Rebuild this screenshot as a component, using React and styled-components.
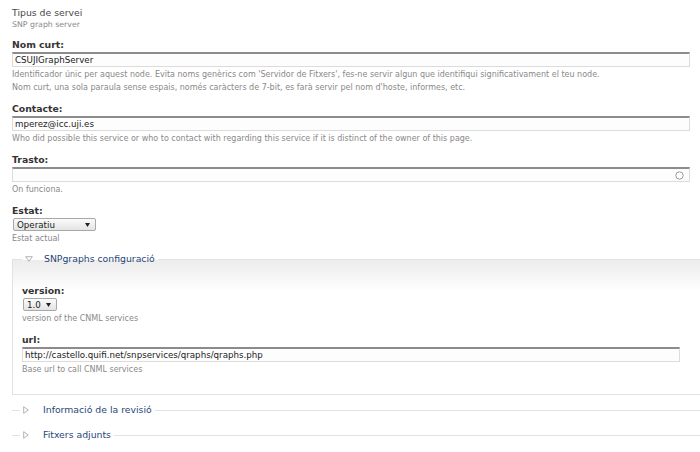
import React from 'react';
import styled, { createGlobalStyle } from 'styled-components';

const Global = createGlobalStyle`
  html, body { margin: 0; padding: 0; background: #fff; }
  body { font-family: "DejaVu Sans", Verdana, sans-serif; color: #494949; }
  * { box-sizing: border-box; }
`;

const Page = styled.div`
  width: 700px;
  overflow: hidden;
  padding: 7px 0 20px 12px;
`;

const Header = styled.div`
  margin-bottom: 9px;
`;

const Title = styled.div`
  font-size: 9.3px;
  line-height: 12px;
  color: #494949;
`;

const Sub = styled.div`
  font-size: 7.8px;
  line-height: 11px;
  color: #898989;
`;

const Item = styled.div`
  padding-right: ${(p) => p.$right ?? 10}px;
  margin-bottom: ${(p) => p.$mb ?? 10}px;
`;

const Label = styled.div`
  font-size: 9.3px;
  font-weight: bold;
  line-height: 12px;
  color: #333;
  margin-bottom: 1px;
`;

const Input = styled.div`
  position: relative;
  height: 15px;
  border: 1px solid #dcdcdc;
  border-top: 2px solid #8c8c8c;
  background: #fdfdfd;
  font-size: 8.7px;
  line-height: 12px;
  padding-left: 2px;
  color: #222;
  white-space: nowrap;
`;

const Throbber = styled.svg`
  position: absolute;
  right: 5px;
  top: 2px;
`;

const Desc = styled.div`
  font-size: 8px;
  line-height: 11px;
  color: #898989;
  margin-top: 2px;
`;

const Select = styled.div`
  display: flex;
  align-items: center;
  justify-content: space-between;
  width: ${(p) => p.$w}px;
  height: 13px;
  margin: 1px 0 0 ${(p) => p.$ml ?? 1}px;
  padding: 0 5px 0 3px;
  border: 1px solid #a8a8a8;
  border-radius: 2px;
  background: linear-gradient(#fbfbfb, #e4e4e4);
  font-size: 8.7px;
  color: #222;
`;

const Fieldset = styled.fieldset`
  margin: 0 -20px 0 0;
  min-width: 0;
  border: 1px solid #e2e2e2;
  border-right: 0;
  padding: ${(p) => (p.$open ? '20px 40px 19px 9px' : '0 0 0 8px')};
  background: ${(p) => (p.$open ? 'linear-gradient(#ececec 0px, #fff 32px)' : 'transparent')};
  ${(p) =>
    !p.$open &&
    `
    border-left: 0;
    border-bottom: 0;
    margin-bottom: 13px;
  `}
`;

const Legend = styled.legend`
  display: flex;
  align-items: center;
  padding: 0 3px;
  font-size: 9.3px;
  line-height: 12px;
  color: #27467a;
`;

const Tri = styled.svg`
  margin-right: ${(p) => p.$mr}px;
  flex: none;
`;

const Stack = styled.div`
  display: flex;
  flex-direction: column;
`;

const Gap = styled.div`
  height: ${(p) => p.$h}px;
`;

function Arrow() {
  return (
    <svg width="5" height="4" viewBox="0 0 5 4">
      <path d="M0 0 H5 L2.5 4 Z" fill="#222" />
    </svg>
  );
}

function Field({ label, value, desc, throbber, right, mb }) {
  return (
    <Item $right={right} $mb={mb}>
      <Label>{label}</Label>
      <Input>
        {value}
        {throbber && (
          <Throbber width="9" height="9" viewBox="0 0 9 9">
            <circle cx="4.5" cy="4.5" r="3.7" fill="none" stroke="#9a9a9a" strokeWidth="1" />
          </Throbber>
        )}
      </Input>
      {desc.map((d) => (
        <Desc key={d}>{d}</Desc>
      ))}
    </Item>
  );
}

export default function App() {
  return (
    <>
      <Global />
      <Page>
        <Header>
          <Title>Tipus de servei</Title>
          <Sub>SNP graph server</Sub>
        </Header>

        <Field
          label="Nom curt:"
          value="CSUJIGraphServer"
          desc={[
            "Identificador únic per aquest node. Evita noms genèrics com 'Servidor de Fitxers', fes-ne servir algun que identifiqui significativament el teu node.",
            "Nom curt, una sola paraula sense espais, només caràcters de 7-bit, es farà servir pel nom d'hoste, informes, etc.",
          ]}
        />
        <Field
          label="Contacte:"
          value="mperez@icc.uji.es"
          desc={['Who did possible this service or who to contact with regarding this service if it is distinct of the owner of this page.']}
        />
        <Field label="Trasto:" value="" throbber desc={['On funciona.']} />

        <Item $mb={9}>
          <Label>Estat:</Label>
          <Select $w={83}>
            <span>Operatiu</span>
            <Arrow />
          </Select>
          <Desc>Estat actual</Desc>
        </Item>

        <Fieldset $open>
          <Legend>
            <Tri $mr={11} width="8" height="6" viewBox="0 0 8 6">
              <path d="M0.7 0.7 H7.3 L4 5.3 Z" fill="none" stroke="#aaa" strokeWidth="0.9" />
            </Tri>
            SNPgraphs configuració
          </Legend>
          <Stack>
            <Item $right={0}>
              <Label>version:</Label>
              <Select $w={34} $ml={1}>
                <span>1.0</span>
                <Arrow />
              </Select>
              <Desc>version of the CNML services</Desc>
            </Item>
            <Field
              label="url:"
              value="http://castello.quifi.net/snpservices/qraphs/qraphs.php"
              desc={['Base url to call CNML services']}
              right={0}
              mb={0}
            />
          </Stack>
        </Fieldset>

        <Gap $h={9} />

        <Fieldset>
          <Legend>
            <Tri $mr={14} width="6" height="8" viewBox="0 0 6 8">
              <path d="M0.7 0.7 V7.3 L5.3 4 Z" fill="none" stroke="#aaa" strokeWidth="0.9" />
            </Tri>
            Informació de la revisió
          </Legend>
        </Fieldset>
        <Fieldset>
          <Legend>
            <Tri $mr={14} width="6" height="8" viewBox="0 0 6 8">
              <path d="M0.7 0.7 V7.3 L5.3 4 Z" fill="none" stroke="#aaa" strokeWidth="0.9" />
            </Tri>
            Fitxers adjunts
          </Legend>
        </Fieldset>
      </Page>
    </>
  );
}
